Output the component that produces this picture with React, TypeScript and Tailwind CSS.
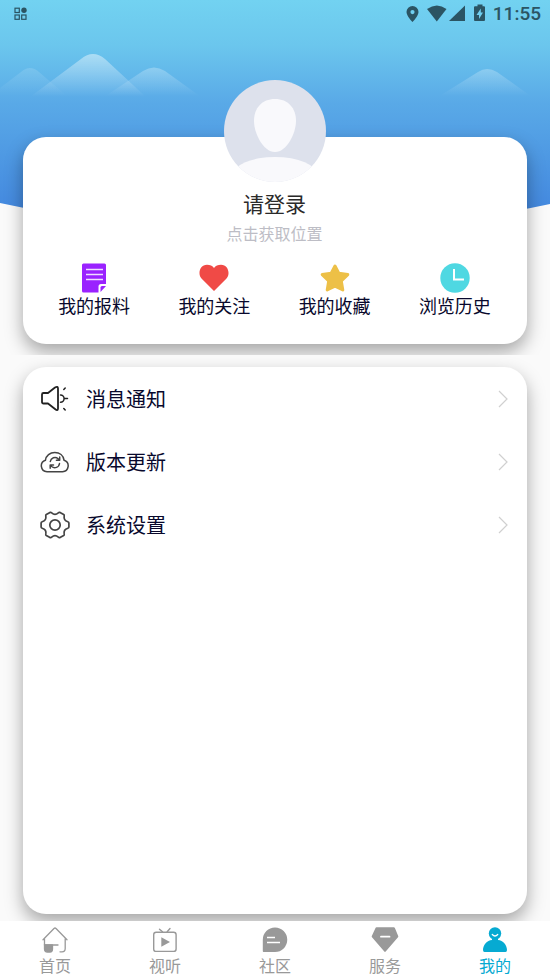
import type { ReactNode } from "react";

type Item = {
  label: string;
  icon: ReactNode;
};

const shortcuts: Item[] = [
  {
    label: "我的报料",
    icon: (
      <svg viewBox="0 0 30 30" className="size-[30px]" aria-hidden="true">
        <path d="M4.500 .5H25.500a1.500 1.500 0 0 1 1.500 1.500V21H22a2.500 2.500 0 0 0-2.500 2.500V29.500H4.500A1.500 1.500 0 0 1 3 28V2A1.500 1.500 0 0 1 4.500 .5Z" fill="#9a22ff" />
        <path d="M21.500 29V24.500a1.500 1.500 0 0 1 1.500-1.500H27Z" fill="#9a22ff" />
        <path d="M7 6.500H24M7 11.500H24M7 16.500H24" stroke="#f0dcff" strokeWidth="1.400" />
      </svg>
    ),
  },
  {
    label: "我的关注",
    icon: (
      <svg viewBox="0 0 30 30" className="size-[30px]" aria-hidden="true">
        <path d="M15 28 2.500 15.500C-1.500 11 .5 2 8 1.800c3 0 5.500 1.200 7 3.200 1.500-2 4-3.200 7-3.200 7.500.2 9.500 9.200 5.500 13.700Z" fill="#f04a46" />
      </svg>
    ),
  },
  {
    label: "我的收藏",
    icon: (
      <svg viewBox="0 0 30 30" className="size-[30px]" aria-hidden="true">
        <path
          d="m15 3 3.800 7.300 9 1.300-6.500 6.300 1.500 9L15 23.200 7.200 26.900l1.500-9-6.500-6.300 9-1.300Z"
          fill="#edc047"
          stroke="#edc047"
          strokeWidth="3"
          strokeLinejoin="round"
        />
      </svg>
    ),
  },
  {
    label: "浏览历史",
    icon: (
      <svg viewBox="0 0 30 30" className="size-[30px]" aria-hidden="true">
        <circle cx="15" cy="15" r="14.700" fill="#4fd8e2" />
        <path d="M14 6V16.500H24" fill="none" stroke="#fff" strokeWidth="2" />
      </svg>
    ),
  },
];

const menu: Item[] = [
  {
    label: "消息通知",
    icon: (
      <svg viewBox="0 0 30 30" className="size-[30px]" fill="none" stroke="#222" strokeWidth="1.800" strokeLinecap="round" strokeLinejoin="round" aria-hidden="true">
        <path d="M3.500 9H8L15 3.500Q18 1.800 18 4.500V24.500Q18 27.500 15 25L8 19.500H3.500Q2 19.500 2 18V10.500Q2 9 3.500 9Z" />
        <path d="M20.500 11a3.600 3.600 0 0 1 0 7.200M25 14.500H27.500M23.800 5.500 25.200 4M23.800 24.500 25.200 26" strokeWidth="1.500" />
      </svg>
    ),
  },
  {
    label: "版本更新",
    icon: (
      <svg viewBox="0 0 30 30" className="size-[30px]" fill="none" stroke="#444" strokeWidth="1.500" strokeLinecap="round" strokeLinejoin="round" aria-hidden="true">
        <path d="M7 24.800A5.900 5.900 0 0 1 5.400 13.300C6 8.500 10 5.500 14.800 5.500s8.600 3 9.300 7.800A5.900 5.900 0 0 1 22.500 24.800Z" />
        <path d="M10.300 14.500a4.700 4.700 0 0 1 7.800-2.800l1.400 1.400M19.700 10V13.300H16.400M19.500 16.500a4.700 4.700 0 0 1-7.800 3L10.300 18M10.200 21.300V18H13.500" />
      </svg>
    ),
  },
  {
    label: "系统设置",
    icon: (
      <svg viewBox="0 0 30 30" className="size-[30px]" fill="none" stroke="#444" strokeWidth="1.700" strokeLinejoin="round" aria-hidden="true">
        <path d="M10 2.400Q11 2 11.700 2.900Q15 5.800 18.300 2.900Q19 2 20 2.400L23.700 4.500Q24.500 5 24.200 6Q23.400 10.500 27.800 11.700Q28.900 12 28.900 13V17Q28.900 18 27.800 18.300Q23.400 19.500 24.200 24Q24.500 25 23.700 25.500L20 27.600Q19 28 18.300 27.100Q15 24.200 11.700 27.100Q11 28 10 27.600L6.300 25.500Q5.500 25 5.800 24Q6.600 19.500 2.200 18.300Q1.100 18 1.100 17V13Q1.100 12 2.200 11.700Q6.600 10.500 5.800 6Q5.500 5 6.300 4.500Z" />
        <circle cx="15" cy="15" r="5.200" />
      </svg>
    ),
  },
];

const tabs: Item[] = [
  {
    label: "首页",
    icon: (
      <svg viewBox="0 0 28 28" className="size-7" fill="none" stroke="#999" strokeWidth="1.300" strokeLinecap="round" strokeLinejoin="round" aria-hidden="true">
        <path d="M2 13.800 13 2.500Q14 1.600 15 2.500L26 13.800M3.500 13V19M24.200 13V22.500Q24.200 25.800 21 25.800H19" />
        <path d="M3.500 19H17" />
        <path d="M3.500 19H11.500V23Q11.500 26 9 26H6.500Q3.500 26 3.500 23Z" fill="#999" />
      </svg>
    ),
  },
  {
    label: "视听",
    icon: (
      <svg viewBox="0 0 28 28" className="size-7" fill="none" stroke="#999" strokeWidth="1.400" strokeLinecap="round" aria-hidden="true">
        <rect x="2.700" y="6.200" width="22.400" height="19.200" rx="2.500" />
        <path d="M8.500 3.200 11.500 5.800M19 2.500 16.200 5.800" />
        <path d="M10.300 11.200V20.800L19 16Z" fill="#999" stroke="none" />
      </svg>
    ),
  },
  {
    label: "社区",
    icon: (
      <svg viewBox="0 0 28 28" className="size-7" aria-hidden="true">
        <path d="M14 1.500a12.200 12.200 0 0 1 0 24.500H2.500Q1.800 26 1.800 25V13.700A12.200 12.200 0 0 1 14 1.500Z" fill="#999" />
        <path d="M6 11.500H14M6 16.500H19" stroke="#fff" strokeWidth="1.700" />
      </svg>
    ),
  },
  {
    label: "服务",
    icon: (
      <svg viewBox="0 0 28 28" className="size-7" aria-hidden="true">
        <path d="M5.500 1.300H22.800Q23.500 1.300 23.900 2L27.200 10Q27.500 10.700 27 11.300L14.700 25.500Q14 26.300 13.300 25.500L1 11.300Q.5 10.700 .8 10L4.500 2Q4.800 1.300 5.500 1.300Z" fill="#999" />
        <path d="M10 10.700H18.500" stroke="#fff" strokeWidth="1.800" strokeLinecap="round" />
      </svg>
    ),
  },
  {
    label: "我的",
    icon: (
      <svg viewBox="0 0 28 28" className="size-7" aria-hidden="true">
        <circle cx="14" cy="7.500" r="6.200" fill="#06aad2" />
        <path d="M11 12H17V14C22 14.500 26 19 26 24Q26 26 24.500 26H3.500Q2 26 2 24C2 19 6 14.500 11 14Z" fill="#06aad2" />
        <path d="M11.300 8.500Q14 11.500 16.700 8.500" fill="none" stroke="#fff" strokeWidth="1.300" strokeLinecap="round" />
      </svg>
    ),
  },
];

function Backdrop() {
  return (
    <svg
      viewBox="0 0 550 240"
      preserveAspectRatio="none"
      className="absolute inset-x-0 top-0 h-60 w-full"
      aria-hidden="true"
    >
      <defs>
        <linearGradient id="sky" x1="0" y1="0" x2="0" y2="208" gradientUnits="userSpaceOnUse">
          <stop offset="0" stopColor="#72d2f1" />
          <stop offset="0.22" stopColor="#6bc6ed" />
          <stop offset="0.5" stopColor="#59a9e7" />
          <stop offset="1" stopColor="#4489df" />
        </linearGradient>
        <linearGradient id="peak" x1="0" y1="53" x2="0" y2="97" gradientUnits="userSpaceOnUse">
          <stop offset="0" stopColor="#fff" stopOpacity="0.46" />
          <stop offset="1" stopColor="#fff" stopOpacity="0" />
        </linearGradient>
        <linearGradient id="hill" x1="0" y1="67" x2="0" y2="96" gradientUnits="userSpaceOnUse">
          <stop offset="0" stopColor="#fff" stopOpacity="0.28" />
          <stop offset="1" stopColor="#fff" stopOpacity="0" />
        </linearGradient>
      </defs>
      <path d="M0 0H550V204Q275 263 0 203Z" fill="url(#sky)" />
      <path d="M-12 97 21 72Q30 64 39 72L68 97Z" fill="url(#hill)" opacity="0.5" />
      <path d="M30 97 81 59Q93 49 105 59L146 97Z" fill="url(#peak)" />
      <path d="M104 97 143 71Q154 64 165 71L201 97Z" fill="url(#hill)" />
      <path d="M438 97 478 72Q487 66 497 72L532 97Z" fill="url(#hill)" />
    </svg>
  );
}

function StatusBar() {
  return (
    <header className="flex h-7 items-center justify-between pr-[9px] pl-[14px] text-[#2b5463]">
      <svg viewBox="0 0 14 14" className="size-[14px]" fill="none" stroke="currentColor" strokeWidth="1.200" aria-hidden="true">
        <rect x="1" y="1.200" width="4.300" height="4.300" />
        <circle cx="10" cy="3.300" r="2.700" fill="currentColor" stroke="none" />
        <rect x="1" y="8" width="4.300" height="4.300" />
        <rect x="7.700" y="8" width="4.300" height="4.300" />
      </svg>
      <div className="flex items-center">
        <svg viewBox="0 0 90 20" className="h-5 w-[90px]" fill="currentColor" aria-hidden="true">
          <path fillRule="evenodd" d="M9.500 2a6 6 0 0 1 6 6c0 4-6 10-6 10s-6-6-6-10a6 6 0 0 1 6-6Zm0 4a2.100 2.100 0 1 0 0 4.200 2.100 2.100 0 0 0 0-4.200Z" />
          <path d="M24 5Q34-2.200 43.500 5L33.800 17.500Z" />
          <path d="M62 1.500V17H46Z" />
          <path fillRule="evenodd" d="M74.500.5H79.500V2.200H81Q82 2.200 82 3.200V16Q82 17 81 17H72Q71 17 71 16V3.200Q71 2.200 72 2.200H74.500ZM77.800 4.500 73.500 11H76V15L80 8.500H77.800Z" />
        </svg>
        <span className="font-[Roboto] text-[19px] leading-7 font-medium">11:55</span>
      </div>
    </header>
  );
}

function Avatar() {
  return (
    <svg viewBox="0 0 102 102" className="size-[102px]" aria-hidden="true">
      <defs>
        <clipPath id="face">
          <circle cx="51" cy="51" r="51" />
        </clipPath>
      </defs>
      <g clipPath="url(#face)">
        <path d="M0 0H102V102H0Z" fill="#dde1ec" />
        <path d="M51 19C64 19 72 28 72 41C72 53 63 72 51 72S30 53 30 41C30 28 38 19 51 19Z" fill="#f9f9fc" />
        <ellipse cx="51" cy="95" rx="42" ry="18" fill="#f9f9fc" />
      </g>
    </svg>
  );
}

export default function App() {
  return (
    <div className="relative flex min-h-screen flex-col bg-[#fafafa] font-['Noto_Sans_CJK_SC',sans-serif]">
      <Backdrop />
      <div className="relative flex flex-1 flex-col">
        <StatusBar />

        <section className="overflow-hidden px-[23px] pt-[109px] pb-[11px]">
          <div className="flex flex-col items-center rounded-[23px] bg-white pr-3 pb-[27px] pl-[11px] shadow-[0_8px_18px_rgba(0,0,0,0.34)]">
            <button type="button" className="-mt-[57px] flex flex-col items-center">
              <Avatar />
              <span className="mt-[7px] text-[21px] leading-7 text-[#2a2a2a]">请登录</span>
            </button>
            <button type="button" className="mt-1 text-base leading-6 text-[#bdbdc5]">
              点击获取位置
            </button>
            <div className="mt-[18px] grid w-full grid-cols-4">
              {shortcuts.map((item) => (
                <button key={item.label} type="button" className="flex flex-col items-center text-lg leading-6 text-[#08082c]">
                  {item.icon}
                  {item.label}
                </button>
              ))}
            </div>
          </div>
        </section>

        <main className="flex flex-1 flex-col px-[23px] pt-3 pb-[7px]">
          <ul className="flex-1 rounded-[23px] bg-white shadow-[0_8px_18px_rgba(0,0,0,0.34)]">
            {menu.map((item) => (
              <li key={item.label}>
                <button type="button" className="flex h-[63px] w-full items-center pr-[18px] pl-[17px] text-xl text-[#08082c]">
                  {item.icon}
                  <span className="ml-4 flex-1 text-left">{item.label}</span>
                  <svg viewBox="0 0 12 18" className="h-[18px] w-3" fill="none" stroke="#d0d0d0" strokeWidth="1.200" aria-hidden="true">
                    <path d="M2 1 10 9 2 17" />
                  </svg>
                </button>
              </li>
            ))}
          </ul>
        </main>

        <nav className="relative grid grid-cols-5 bg-white pt-[5px] pb-[2px]">
          {tabs.map((tab) => (
            <a
              key={tab.label}
              href="#"
              aria-current={tab.label === "我的" ? "page" : undefined}
              className="flex flex-col items-center text-base leading-[22px] text-[#999] aria-[current=page]:text-[#06aad2]"
            >
              {tab.icon}
              {tab.label}
            </a>
          ))}
        </nav>
      </div>
    </div>
  );
}
